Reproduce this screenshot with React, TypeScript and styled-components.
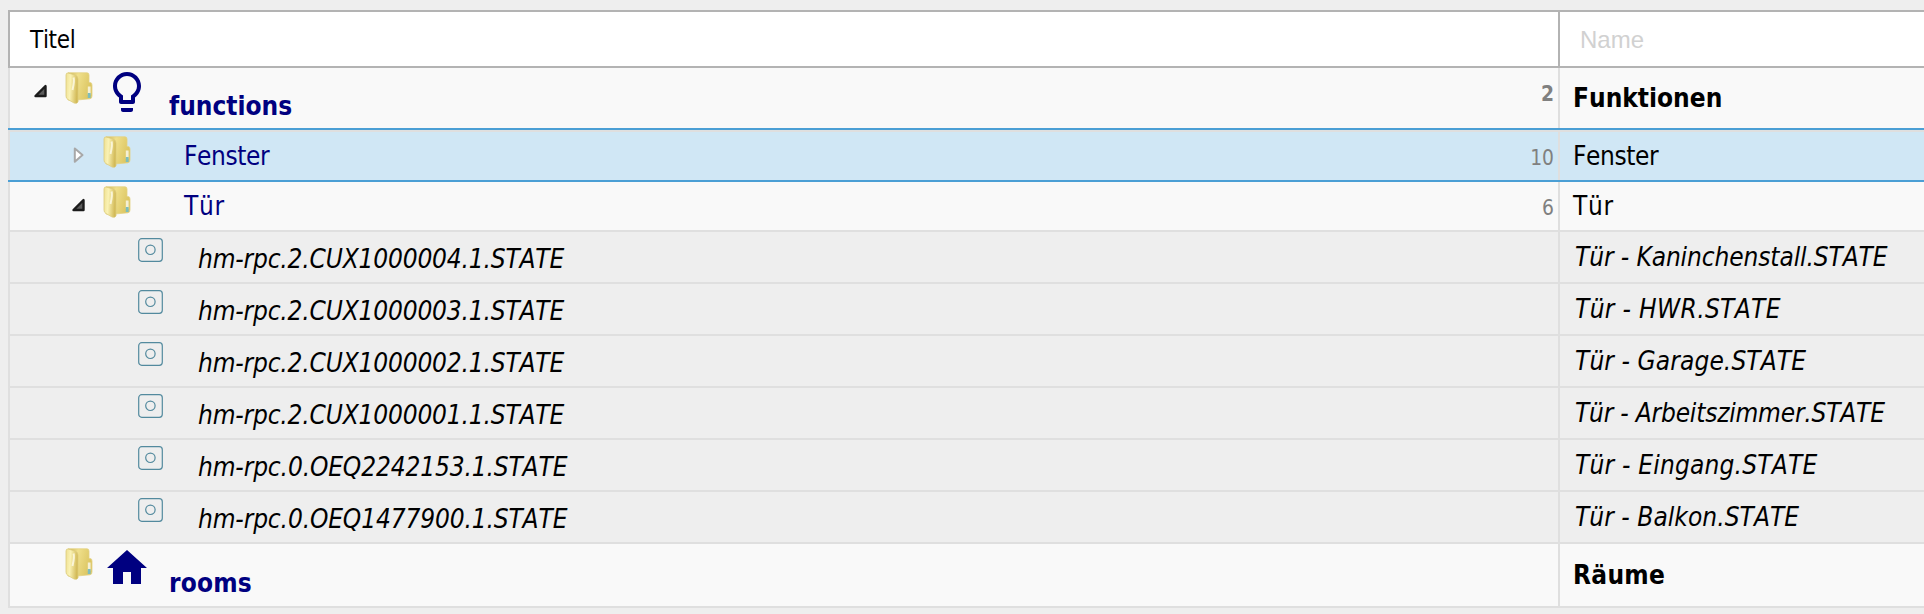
import React from 'react';
import styled, { createGlobalStyle, css } from 'styled-components';

const GlobalStyle = createGlobalStyle`
  body {
    margin: 0;
    background: #eeeeee;
    font-family: 'DejaVu Sans Condensed', 'DejaVu Sans', sans-serif;
    font-kerning: none;
    color: #000;
    overflow: hidden;
  }
`;

const Page = styled.main`
  height: 614px;
  box-sizing: border-box;
  padding: 10px 0 0 8px;
  overflow: hidden;
`;

const columns = css`
  display: grid;
  grid-template-columns: 1550px 1fr;
`;

const Header = styled.div`
  ${columns}
  height: 58px;
  box-sizing: border-box;
  border: 2px solid #b3b3b3;
  border-right: 0;
  background: #fff;
  font-size: 24px;
  line-height: 30px;
`;

const HeaderTitle = styled.div`
  box-sizing: border-box;
  padding: 13px 0 0 20px;
  border-right: 2px solid #b3b3b3;
  letter-spacing: -0.3px;
`;

const HeaderFilter = styled.div`
  padding: 13px 0 0 20px;
  color: #d1d1d1;
  font-family: 'Liberation Sans', Arial, sans-serif;
`;

type Kind = 'group' | 'folder' | 'state';

const Rule = styled.div<{ $active?: boolean }>`
  height: 2px;
  background: ${p => (p.$active ? '#4b9fd5' : '#dfdfdf')};
`;

const Row = styled.div<{ $height: number; $kind: Kind; $selected?: boolean }>`
  ${columns}
  height: ${p => p.$height}px;
  box-sizing: border-box;
  border-left: 2px solid #dfdfdf;
  background: ${p => (p.$selected ? '#d0e7f5' : p.$kind === 'state' ? '#eeeeee' : '#f9f9f9')};
  font-size: 26px;
  line-height: 30px;
  font-weight: ${p => (p.$kind === 'group' ? 700 : 400)};
  font-style: ${p => (p.$kind === 'state' ? 'italic' : 'normal')};
`;

const TitleCell = styled.div<{ $indent: number }>`
  display: flex;
  align-items: flex-start;
  box-sizing: border-box;
  padding: 0 4px 0 ${p => p.$indent}px;
  border-right: 2px solid #dfdfdf;
`;

const NameCell = styled.div<{ $kind: Kind; $spacing: number }>`
  display: flex;
  align-items: center;
  padding-left: ${p => (p.$kind === 'state' ? 15 : 13)}px;
  white-space: nowrap;
  letter-spacing: ${p => p.$spacing}px;
`;

const Slot = styled.span<{ $width: number; $top: number }>`
  display: flex;
  flex: none;
  width: ${p => p.$width}px;
  margin-top: ${p => p.$top}px;
`;

const Label = styled.span<{ $kind: Kind; $top: number; $spacing: number }>`
  flex: 1;
  margin-top: ${p => p.$top}px;
  color: ${p => (p.$kind === 'state' ? '#000' : '#000080')};
  letter-spacing: ${p => p.$spacing}px;
`;

const Count = styled.span`
  margin-top: 11px;
  color: #808080;
  font-size: 20.8px;
`;

const Expanded = () => (
  <svg width="32" height="32" viewBox="0 0 32 32">
    <path d="M11.5 28 L21.5 18 V28 Z" fill="#5c5c5c" stroke="#1c1c1c" strokeWidth="2.4" strokeLinejoin="round" />
  </svg>
);

const Collapsed = () => (
  <svg width="32" height="32" viewBox="0 0 32 32">
    <path d="M12.8 16.5 L20.5 23 L12.8 29.8 Z" fill="#fff" stroke="#a8a8a8" strokeWidth="2" strokeLinejoin="round" />
  </svg>
);

const Folder = () => (
  <svg width="32" height="32" viewBox="0 0 32 32">
    <defs>
      <linearGradient id="folderBack" x1="0" x2="1" y1="0" y2="0.3">
        <stop offset="0" stopColor="#c9b050" />
        <stop offset="0.4" stopColor="#f0e08c" />
        <stop offset="1" stopColor="#dcc662" />
      </linearGradient>
      <linearGradient id="folderFront" x1="0" x2="1" y1="0" y2="0.15">
        <stop offset="0" stopColor="#efe092" />
        <stop offset="0.4" stopColor="#faf2b4" />
        <stop offset="1" stopColor="#d2b956" />
      </linearGradient>
    </defs>
    <path d="M4 .8 H23 Q25 .8 25 3 V10.5 H26.2 Q28 10.5 28 13 V24 Q28 26.5 26 26.8 L13 28 H4 Z" fill="url(#folderBack)" stroke="#e3d283" strokeWidth=".8" />
    <path d="M2 3 Q2 .8 4 1 L11 3 Q14 4 14 7 V30 Q13 32 10 31 L4 27.5 Q2 26.5 2 24 Z" fill="url(#folderFront)" stroke="#dccb7c" strokeWidth=".8" />
    <path d="M9.5 5.5 Q10.8 8 8.5 18" stroke="#fffdf0" strokeWidth="2" fill="none" opacity=".75" />
    <rect x="23.8" y="14.5" width="2.8" height="8" fill="#f5f0d4" />
    <rect x="23.8" y="21" width="2.8" height="5" fill="#7dbdbc" />
  </svg>
);

const Bulb = () => (
  <svg width="48" height="48" viewBox="0 0 24 24" fill="#000080">
    <path d="M9 21c0 .55.45 1 1 1h4c.55 0 1-.45 1-1v-1H9v1zm3-19C8.14 2 5 5.14 5 9c0 2.38 1.19 4.47 3 5.74V17c0 .55.45 1 1 1h6c.55 0 1-.45 1-1v-2.26c1.81-1.27 3-3.36 3-5.74 0-3.86-3.14-7-7-7zm2.85 11.1l-.85.6V16h-4v-2.3l-.85-.6C7.8 12.16 7 10.63 7 9c0-2.76 2.24-5 5-5s5 2.24 5 5c0 1.63-.8 3.16-2.15 4.1z" />
  </svg>
);

const Home = () => (
  <svg width="48" height="48" viewBox="0 0 24 24" fill="#000080">
    <path d="M10 20v-6h4v6h5v-8h3L12 3 2 12h3v8z" />
  </svg>
);

const StateIcon = () => (
  <svg width="26" height="26" viewBox="0 0 26 26" fill="none" stroke="#538a9e" strokeWidth="1.2">
    <rect x=".7" y=".7" width="23.6" height="22.6" rx="3" />
    <circle cx="12.4" cy="11.8" r="4.7" />
  </svg>
);

interface Item {
  id: string;
  name: string;
  kind: Kind;
  height: number;
  top: number;
  expander?: 'open' | 'closed';
  icon?: 'bulb' | 'home';
  count?: number;
  selected?: boolean;
  idSpacing?: number;
  nameSpacing?: number;
}

const state = (id: string, name: string, idSpacing: number, nameSpacing: number): Item => ({
  id,
  name,
  kind: 'state',
  height: 50,
  top: 12,
  idSpacing,
  nameSpacing,
});

const items: Item[] = [
  { id: 'functions', name: 'Funktionen', kind: 'group', height: 60, expander: 'open', icon: 'bulb', count: 2, top: 23 },
  { id: 'Fenster', name: 'Fenster', kind: 'folder', height: 48, expander: 'closed', count: 10, selected: true, top: 9, idSpacing: -0.4, nameSpacing: -0.4 },
  { id: 'Tür', name: 'Tür', kind: 'folder', height: 48, expander: 'open', count: 6, top: 9, idSpacing: 0.7, nameSpacing: 0.7 },
  state('hm-rpc.2.CUX1000004.1.STATE', 'Tür - Kaninchenstall.STATE', -0.17, -0.1),
  state('hm-rpc.2.CUX1000003.1.STATE', 'Tür - HWR.STATE', -0.17, 0.35),
  state('hm-rpc.2.CUX1000002.1.STATE', 'Tür - Garage.STATE', -0.17, 0.1),
  state('hm-rpc.2.CUX1000001.1.STATE', 'Tür - Arbeitszimmer.STATE', -0.17, -0.2),
  state('hm-rpc.0.OEQ2242153.1.STATE', 'Tür - Eingang.STATE', -0.13, 0.2),
  state('hm-rpc.0.OEQ1477900.1.STATE', 'Tür - Balkon.STATE', -0.13, 0.05),
  { id: 'rooms', name: 'Räume', kind: 'group', height: 62, icon: 'home', top: 24, idSpacing: 0.2, nameSpacing: 0.3 },
];

const indents: Record<Kind, number> = { group: 14, folder: 52, state: 128 };

function TreeRow({ item }: { item: Item }) {
  const { kind } = item;
  return (
    <Row $height={item.height} $kind={kind} $selected={item.selected}>
      <TitleCell $indent={indents[kind]}>
        {kind === 'state' ? (
          <Slot $width={60} $top={6}><StateIcon /></Slot>
        ) : (
          <>
            <Slot $width={40} $top={0}>
              {item.expander === 'open' && <Expanded />}
              {item.expander === 'closed' && <Collapsed />}
            </Slot>
            <Slot $width={kind === 'group' ? 39 : 82} $top={4}><Folder /></Slot>
            {kind === 'group' && (
              <Slot $width={66} $top={0}>{item.icon === 'bulb' ? <Bulb /> : <Home />}</Slot>
            )}
          </>
        )}
        <Label $kind={kind} $top={item.top} $spacing={item.idSpacing ?? 0}>{item.id}</Label>
        {item.count !== undefined && <Count>{item.count}</Count>}
      </TitleCell>
      <NameCell $kind={kind} $spacing={item.nameSpacing ?? 0}>{item.name}</NameCell>
    </Row>
  );
}

export default function App() {
  return (
    <>
      <GlobalStyle />
      <Page>
        <Header>
          <HeaderTitle>Titel</HeaderTitle>
          <HeaderFilter>Name</HeaderFilter>
        </Header>
        {items.map((item, i) => (
          <React.Fragment key={item.id}>
            <TreeRow item={item} />
            <Rule $active={item.selected || items[i + 1]?.selected} />
            {items[i + 1]?.selected && <Rule />}
          </React.Fragment>
        ))}
      </Page>
    </>
  );
}
